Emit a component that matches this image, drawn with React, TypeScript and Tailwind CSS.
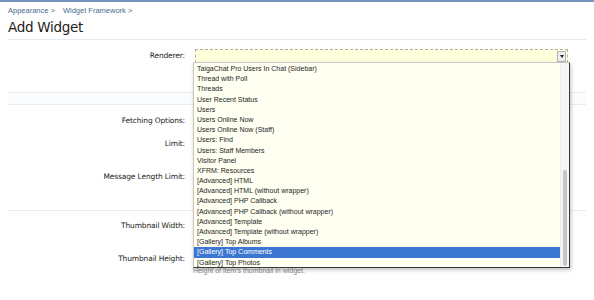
import React from "react";

const items = [
  "TaigaChat Pro Users In Chat (Sidebar)",
  "Thread with Poll",
  "Threads",
  "User Recent Status",
  "Users",
  "Users Online Now",
  "Users Online Now (Staff)",
  "Users: Find",
  "Users: Staff Members",
  "Visitor Panel",
  "XFRM: Resources",
  "[Advanced] HTML",
  "[Advanced] HTML (without wrapper)",
  "[Advanced] PHP Callback",
  "[Advanced] PHP Callback (without wrapper)",
  "[Advanced] Template",
  "[Advanced] Template (without wrapper)",
  "[Gallery] Top Albums",
  "[Gallery] Top Comments",
  "[Gallery] Top Photos",
];

function Label({ text }: { text: string }) {
  return (
    <div className="w-[177px] shrink-0 text-right text-[7.5px] leading-[10px] text-[#222] [font-family:'DejaVu_Sans',sans-serif] tracking-[-0.15px]">
      {text}
    </div>
  );
}

export default function App() {
  return (
    <div className="relative w-[594px] h-[300px] overflow-hidden bg-white [font-family:'Liberation_Sans',Arial,sans-serif]">
      <div className="h-[2px] bg-[#7896bb]" />
      <div className="px-2">
        <div className="pt-[4px] text-[7.5px] leading-[10px] text-[#4a6a94] flex gap-[8px]">
          <span>Appearance &gt;</span>
          <span>Widget Framework &gt;</span>
        </div>
        <div className="mt-[3px] text-[13.5px] leading-[16px] text-[#222] [font-family:'DejaVu_Sans',sans-serif] tracking-[-0.3px]">
          Add Widget
        </div>
        <div className="mt-[4px] border-t border-[#e2eaf0]" />

        <div className="flex items-center h-[20px] mt-[6px]">
          <Label text="Renderer:" />
          <div className="ml-[10px] w-[373px] h-[14px] bg-[#ffffdc] border border-dashed border-[#b0b0a0] flex justify-end items-center pr-[1px]">
            <div className="w-[9px] h-[11px] bg-[#eeeeee] border border-[#b5b5b5] flex items-center justify-center">
              <div className="w-0 h-0 border-l-[2.5px] border-r-[2.5px] border-t-[3px] border-l-transparent border-r-transparent border-t-[#222]" />
            </div>
          </div>
        </div>

        <div className="mt-[26px] border-t border-[#e6edf3]" />
        <div className="h-[11px] bg-[#fbfcfd]" />
        <div className="border-t border-[#e6edf3]" />

        <div className="flex mt-[11px] h-[10px]">
          <Label text="Fetching Options:" />
        </div>
        <div className="flex mt-[13px] h-[10px]">
          <Label text="Limit:" />
        </div>
        <div className="flex mt-[23px] h-[10px]">
          <Label text="Message Length Limit:" />
        </div>
        <div className="mt-[28px] border-t border-[#e6edf3]" />
        <div className="flex mt-[10px] h-[10px]">
          <Label text="Thumbnail Width:" />
        </div>
        <div className="flex mt-[23px] h-[10px]">
          <Label text="Thumbnail Height:" />
        </div>
        <div className="ml-[185px] mt-[2px] text-[7px] leading-[9px] text-[#8a8a8a]">
          Height of item's thumbnail in widget.
        </div>
      </div>

      <div className="absolute left-[193px] top-[62px] w-[377px] h-[206px] bg-[#fffff2] border-l border-t border-[#c8c8c8] border-r border-b border-r-[#3a3a3a] border-b-[#3a3a3a] shadow-[1px_2px_4px_rgba(0,0,0,0.25)] flex">
        <div className="flex-1 pt-[1px]">
          {items.map((t) => (
            <div
              key={t}
              className={
                t === "[Gallery] Top Comments"
                  ? "h-[10.2px] leading-[10.2px] pl-[3px] text-[7px] bg-[#3b77d2] text-white whitespace-nowrap"
                  : "h-[10.2px] leading-[10.2px] pl-[3px] text-[7px] text-[#1e1e1e] whitespace-nowrap"
              }
            >
              {t}
            </div>
          ))}
        </div>
        <div className="w-[9px] bg-[#f6f6f4] border-l border-[#ececec] relative">
          <div className="absolute left-[2px] top-[107px] w-[4px] h-[96px] rounded-full bg-[#c6c6c6]" />
        </div>
      </div>
    </div>
  );
}
